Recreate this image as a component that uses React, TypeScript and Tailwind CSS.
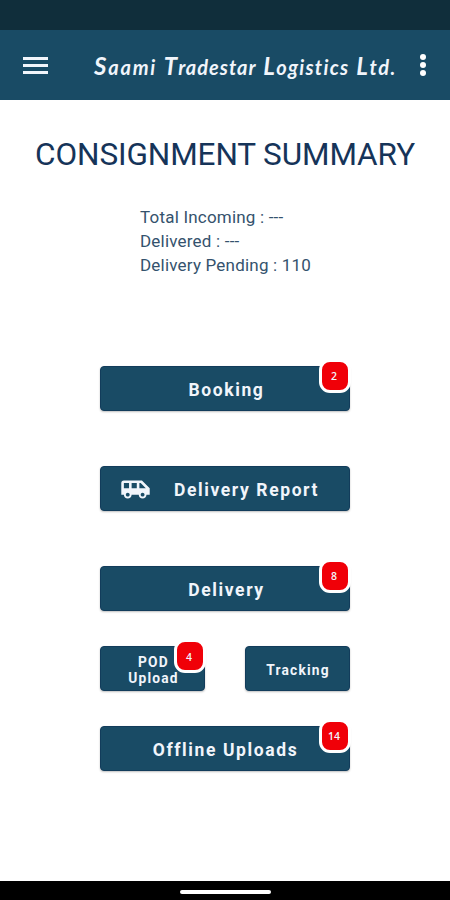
import React from 'react'
import { MdAirportShuttle } from 'react-icons/md'

type BadgeButtonProps = {
  children: React.ReactNode
  badge?: number
  className?: string
}

const titleWords = [
  { text: 'Saami', className: 'tracking-[1.8px]' },
  { text: 'Tradestar', className: 'tracking-[1px]' },
  { text: 'Logistics', className: 'tracking-[1.3px]' },
  { text: 'Ltd.', className: 'tracking-[1.6px]' },
]

const summary = [
  { label: 'Total Incoming', value: '---' },
  { label: 'Delivered', value: '---' },
  { label: 'Delivery Pending', value: '110' },
]

function ActionButton({ children, badge, className = '' }: BadgeButtonProps) {
  return (
    <button
      className={`relative flex h-[45px] items-center justify-center rounded-[4px] border border-[#123c5b] bg-[#194b65] font-bold text-[#f1f5fb] shadow-[0_1px_2px_rgba(0,0,0,0.25)] ${className}`}
    >
      {children}
      {badge !== undefined && (
        <span className="absolute -top-[8px] -right-[2px] flex h-[34px] w-[32px] items-center justify-center rounded-[11px] border-[3px] border-white bg-[#f00008] pt-[2px] pr-[2px] font-['Open_Sans',sans-serif] text-[10.5px] font-semibold tracking-normal">
          {badge}
        </span>
      )}
    </button>
  )
}

function Header() {
  return (
    <header className="flex h-[70px] items-center bg-[#194b65]">
      {/* menu icon */}
      <button className="ml-[23px] flex w-[25px] flex-col gap-[4px]">
        <span className="h-[3px] bg-[#f1f5fb]" />
        <span className="h-[3px] bg-[#f1f5fb]" />
        <span className="h-[3px] bg-[#f1f5fb]" />
      </button>
      <h1 className="mt-[2px] ml-[46px] flex w-[303px] items-baseline justify-between font-['Lato',sans-serif] text-[20px] leading-[28px] font-bold whitespace-nowrap text-[#f1f5fb] italic">
        {titleWords.map((word) => (
          <span
            key={word.text}
            className={`inline-block first-letter:text-[24px] ${word.className}`}
          >
            {word.text}
          </span>
        ))}
      </h1>
      {/* overflow icon */}
      <button className="ml-[23px] flex flex-col gap-[2px]">
        <span className="size-[6px] rounded-full bg-white" />
        <span className="size-[6px] rounded-full bg-white" />
        <span className="size-[6px] rounded-full bg-white" />
      </button>
    </header>
  )
}

export default function App() {
  return (
    <div className="flex h-[900px] w-[450px] flex-col bg-white font-['Roboto',sans-serif]">
      <div className="h-[30px] bg-[#102e3b]" />
      <Header />
      <main className="flex flex-1 flex-col items-center">
        <h2 className="mt-[35px] text-[31.5px] leading-[40px] font-normal tracking-[-0.1px] whitespace-nowrap text-[#163459]">
          CONSIGNMENT SUMMARY
        </h2>
        <div className="mt-[30px] w-[170px] text-[17px] leading-[24px] tracking-[0.2px] whitespace-nowrap text-[#34526d]">
          {summary.map((item) => (
            <p key={item.label}>
              {item.label} : {item.value}
            </p>
          ))}
        </div>
        <div className="mt-[89px] flex w-[250px] flex-col text-[17.5px] tracking-[1.6px]">
          <ActionButton badge={2} className="pt-[4px] pl-[3px]">
            Booking
          </ActionButton>
          <ActionButton className="mt-[55px] pt-[4px] pl-[3px]">
            <MdAirportShuttle className="-mt-[3px] mr-[23px] -ml-[14px] size-[31px]" />
            Delivery Report
          </ActionButton>
          <ActionButton badge={8} className="mt-[55px] pt-[4px] pl-[3px]">
            Delivery
          </ActionButton>
          <div className="mt-[35px] flex justify-between text-[13.75px] leading-[16px] tracking-[1.2px]">
            <ActionButton badge={4} className="w-[105px] pt-[2px] pl-[2px]">
              POD
              <br />
              Upload
            </ActionButton>
            <ActionButton className="w-[105px] pt-[2px] pl-px">
              Tracking
            </ActionButton>
          </div>
          <ActionButton badge={14} className="mt-[35px] pt-[4px] pl-px">
            Offline Uploads
          </ActionButton>
        </div>
      </main>
      {/* gesture bar */}
      <div className="flex h-[19px] items-center justify-center bg-black">
        <div className="mt-[2px] h-[4px] w-[91px] rounded-full bg-white" />
      </div>
    </div>
  )
}
